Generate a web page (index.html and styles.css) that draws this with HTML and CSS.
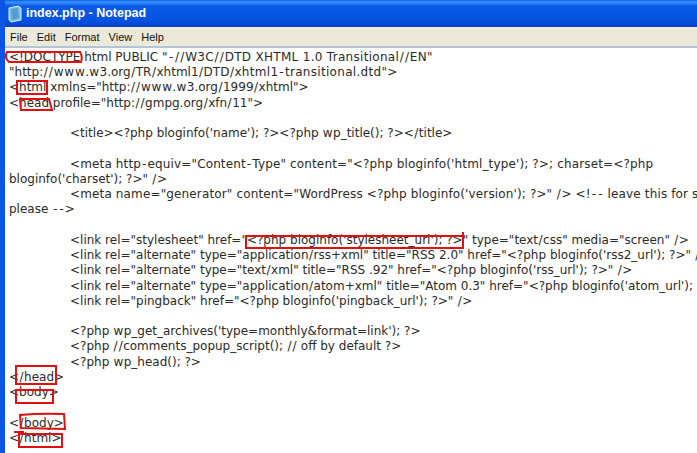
FILE: index.html
```html
<!DOCTYPE html>
<html lang="en">
<head>
<meta charset="utf-8">
<title>index.php - Notepad</title>
<link rel="stylesheet" href="styles.css">
</head>
<body>
<div class="window">
  <header class="titlebar">
    <svg class="appicon" width="16" height="18" viewBox="0 0 16 18"><path d="M2 3 L11 1 L14 3 L14 15 L4 17 L2 15 Z" fill="#7cc0e6" stroke="#dcebf3" stroke-width="1"/><path d="M4 4 L11 3 L12 13 L5 15 Z" fill="#4f9fd2"/></svg>
    <span class="titletext">index.php - Notepad</span>
  </header>
  <nav class="menubar"><span>File</span><span>Edit</span><span>Format</span><span>View</span><span>Help</span></nav>
  <main class="editor">
    <div class="line">&lt;!DOCTYPE html PUBLIC <span class="spread">"<i>-</i><b>/</b><b>/</b>W3C<b>/</b><b>/</b>DTD XHTML 1.0 Transitional<b>/</b><b>/</b>EN"</span></div>
    <div class="line">"http:<b>/</b><b>/</b><em>w</em><em>w</em><em>w</em>.<em>w</em>3.org<b>/</b>TR<b>/</b>xhtml1<b>/</b>DTD<b>/</b><span class="spread">xhtml1<i>-</i>transitional.dtd"&gt;</span></div>
    <div class="line">&lt;html xmlns="http:<b>/</b><b>/</b><em>w</em><em>w</em><em>w</em>.<em>w</em>3.org<b>/</b>1999<b>/</b>xhtml"&gt;</div>
    <div class="line">&lt;head profile="http:<b>/</b><b>/</b>gmpg.org<b>/</b>xfn<b>/</b>11"&gt;</div>
    <div class="line"></div>
    <div class="line in">&lt;title&gt;&lt;?php bloginfo('name'); ?&gt;&lt;?php <em>w</em>p_title(); ?&gt;&lt;<b>/</b>title&gt;</div>
    <div class="line"></div>
    <div class="line in loose">&lt;meta http<i>-</i>equiv="Content<i>-</i>Type" content="&lt;?php bloginfo('html_type'); ?&gt;; charset=&lt;?php</div>
    <div class="line">bloginfo('charset'); ?&gt;" <b>/</b>&gt;</div>
    <div class="line in loose">&lt;meta name="generator" content="WordPress &lt;?php bloginfo('version'); ?&gt;" <b>/</b>&gt; &lt;!<i>-</i><i>-</i> leave this for stats</div>
    <div class="line">please <i>-</i><i>-</i>&gt;</div>
    <div class="line"></div>
    <div class="line in">&lt;link rel="stylesheet" href="&lt;?php bloginfo('stylesheet_url'); ?&gt;" type="text<b>/</b>css" media="screen" <b>/</b>&gt;</div>
    <div class="line in">&lt;link rel="alternate" type="application<b>/</b>rss+xml" title="RSS 2.0" href="&lt;?php bloginfo('rss2_url'); ?&gt;" <b>/</b>&gt;</div>
    <div class="line in">&lt;link rel="alternate" type="text<b>/</b>xml" title="RSS .92" href="&lt;?php bloginfo('rss_url'); ?&gt;" <b>/</b>&gt;</div>
    <div class="line in">&lt;link rel="alternate" type="application<b>/</b>atom+xml" title="Atom 0.3" href="&lt;?php bloginfo('atom_url'); ?&gt;" <b>/</b>&gt;</div>
    <div class="line in">&lt;link rel="pingback" href="&lt;?php bloginfo('pingback_url'); ?&gt;" <b>/</b>&gt;</div>
    <div class="line"></div>
    <div class="line in">&lt;?php <em>w</em>p_get_archives('type=monthly&amp;format=link'); ?&gt;</div>
    <div class="line in">&lt;?php <b>/</b><b>/</b>comments_popup_script(); <b>/</b><b>/</b> off by default ?&gt;</div>
    <div class="line in">&lt;?php <em>w</em>p_head(); ?&gt;</div>
    <div class="line">&lt;<b>/</b>head&gt;</div>
    <div class="line">&lt;body&gt;</div>
    <div class="line"></div>
    <div class="line">&lt;<b>/</b>body&gt;</div>
    <div class="line">&lt;<b>/</b>html&gt;</div>
  </main>
  <svg class="marks" width="697" height="453" viewBox="0 0 697 453">
    <g fill="none" stroke="#e01010" stroke-width="2">
      <path d="M7 52 H80 Q83 57 81 62 H9 Q4 58 7 52 Z"/>
      <path d="M17 81 H47 V94 H17 Z"/>
      <path d="M20 99 H49 L52 110 H21 Z"/>
      <path d="M246 236 H463 M463 232 V248 H246 V236"/>
      <path d="M16 366 H56 V384 H16 Z"/>
      <path d="M16 390 H53 V403 H16 Z"/>
      <path d="M20 415 Q40 413 64 414 L65 429 L21 428 Z"/>
      <path d="M14 432 H24 M19 434 H62 V447 H19 Z"/>
    </g>
  </svg>
</div>
</body>
</html>
```
FILE: styles.css
```css
html, body { margin: 0; padding: 0; }
body { width: 697px; height: 453px; overflow: hidden; background: #fff; }
.window { position: relative; width: 697px; height: 453px; overflow: hidden; border-left: 5px solid #0a55e4; box-sizing: border-box; background: #fff; }
.titlebar { height: 27px; margin-left: -5px; padding-left: 7px; display: flex; align-items: center; gap: 3px; background: linear-gradient(#0a5fe8 0, #3a93ff 8%, #0a5ce8 22%, #0552e0 75%, #0543c8 100%); }
.titletext { font: bold 12.5px/1 "Liberation Sans", sans-serif; color: #fff; }
.appicon { flex: none; }
.menubar { height: 19px; display: flex; align-items: center; gap: 9px; padding-left: 5px; background: #ece9d8; font: 11px/1 "Liberation Sans", sans-serif; color: #111; border-top: 1px solid #f5f0dc; box-sizing: border-box; }
.editor { border-top: 2px solid #b4c4d8; padding-top: 2px; font: 12px/15.24px "DejaVu Sans", sans-serif; color: #2a2a2a; }
.line { height: 15.24px; padding-left: 4px; white-space: pre; }
.line b { font-weight: normal; padding: 0 .5px; }
.line i { font-style: normal; padding: 0 1px; }
.line em { font-style: normal; padding: 0 .4px; }
.spread { letter-spacing: .3px; }
.in { padding-left: 65px; }
.loose { letter-spacing: .14px; }
.marks { position: absolute; left: -5px; top: 0; }
```
